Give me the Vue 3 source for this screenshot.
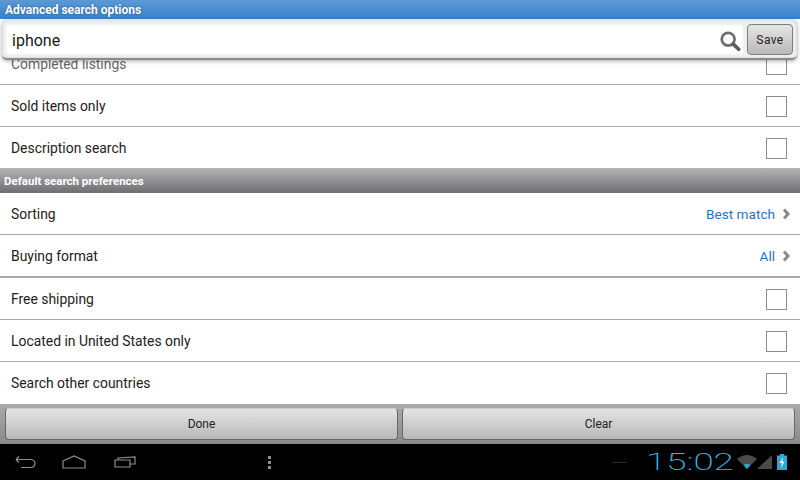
<template>
  <div class="screen">
    <div class="title">Advanced search options</div>
    <div class="search">
      <div class="field">
        <span class="query">iphone</span>
        <svg class="glass" width="22" height="22" viewBox="0 0 24 24">
          <circle cx="10" cy="10" r="7" fill="none" stroke="#6e6e6e" stroke-width="3" />
          <path d="M15.500 15.500l6 5.500" stroke="#5c5c5c" stroke-width="4" stroke-linecap="round" />
        </svg>
      </div>
      <button class="save">Save</button>
    </div>
    <div class="list">
      <div v-for="row in topRows" :key="row" class="row">
        <span class="label">{{ row }}</span>
        <span class="check"></span>
      </div>
      <div class="section">Default search preferences</div>
      <div v-for="row in linkRows" :key="row.label" class="row">
        <span class="label">{{ row.label }}</span>
        <span class="value">{{ row.value }}</span>
        <svg class="chevron" width="9" height="12" viewBox="0 0 9 12">
          <path d="M2 1.500L6 6L2 10.500" fill="none" stroke="#8a8a8a" stroke-width="3" />
        </svg>
      </div>
      <div v-for="row in bottomRows" :key="row" class="row">
        <span class="label">{{ row }}</span>
        <span class="check"></span>
      </div>
    </div>
    <div class="actions">
      <button class="action">Done</button>
      <button class="action">Clear</button>
    </div>
    <div class="nav">
      <div class="nav-left">
        <svg class="back" width="21" height="12" viewBox="0 0 21 12">
          <path d="M1 3.500H15Q20 3.500 20 7.500Q20 11.500 15 11.500H6M1 3.500l3-3M1 3.500l3 3" fill="none" stroke="#8e8e8e" stroke-width="1.200" />
        </svg>
        <svg class="home" width="24" height="14" viewBox="0 0 24 14">
          <path d="M1 6L12 1L23 6V13H1Z" fill="none" stroke="#8e8e8e" stroke-width="1.200" />
        </svg>
        <svg class="recent" width="22" height="12" viewBox="0 0 22 12">
          <path d="M1 4H16V11H1ZM4 4V2L21 .8V8L16 8" fill="none" stroke="#8e8e8e" stroke-width="1.200" />
        </svg>
        <span class="dots"><i></i><i></i><i></i></span>
      </div>
      <div class="nav-right">
        <span class="dash"></span>
        <span class="clock">15:02</span>
        <svg width="20" height="16" viewBox="0 0 20 16">
          <path d="M0 5Q10-3 20 5L10 15Z" fill="#4a4a4a" />
          <path d="M6.500 11Q10 8.500 13.500 11L10 15Z" fill="#33a4d6" />
        </svg>
        <svg class="signal" width="15" height="16" viewBox="0 0 15 16">
          <path d="M15 1V15H0Z" fill="#4a4a4a" />
        </svg>
        <svg class="battery" width="10" height="16" viewBox="0 0 10 16">
          <path d="M3 0H7V1.500H10V16H0V1.500H3Z" fill="#33a4d6" />
          <path d="M6 3L2.500 9H4.800L4 14L7.500 7.500H5.200Z" fill="#e8f6fc" />
        </svg>
      </div>
    </div>
  </div>
</template>

<script setup>
const topRows = ["Completed listings", "Sold items only", "Description search"];
const linkRows = [
  { label: "Sorting", value: "Best match" },
  { label: "Buying format", value: "All" },
];
const bottomRows = ["Free shipping", "Located in United States only", "Search other countries"];
</script>

<style>
html,
body {
  margin: 0;
  background: #000;
}
</style>

<style scoped>
.screen {
  width: 800px;
  height: 480px;
  display: flex;
  flex-direction: column;
  overflow: hidden;
  background: #fff;
  font-family: Roboto, "Liberation Sans", sans-serif;
}

.title {
  height: 19px;
  flex: none;
  padding: 1px 0 0 5px;
  box-sizing: border-box;
  background: linear-gradient(#5c9ad6, #3781cb);
  color: #fff;
  font-size: 12px;
  font-weight: 700;
  line-height: 18px;
  text-shadow: 0 0 2px #1d4f80;
}

.search {
  position: relative;
  z-index: 2;
  height: 40px;
  flex: none;
  box-sizing: border-box;
  display: flex;
  gap: 3px;
  margin: 1px 3px 0 2px;
  padding: 4px 4px 3px 3px;
  border-radius: 5px;
  background: #efefef;
  border-bottom: 2px solid #8a8a8a;
  box-shadow: 0 1px 4px rgba(0, 0, 0, 0.35), inset 0 0 2px #bbb;
}

.field {
  flex: 1;
  display: flex;
  align-items: center;
  justify-content: space-between;
  padding: 0 3px 0 7px;
  background: #fff;
  box-shadow: inset 0 0 3px #ddd;
}

.query {
  padding-top: 2px;
  font-size: 16px;
  color: #1a1a1a;
}

.glass {
  margin-top: 3px;
}

.save {
  width: 46px;
  margin: 0;
  padding: 0;
  border: 1px solid #7d7d7d;
  border-radius: 4px;
  background: linear-gradient(#e6e6e6, #b8b8b8);
  color: #222;
  font: 12px Roboto, "Liberation Sans", sans-serif;
  letter-spacing: 0.4px;
}

.list {
  flex: 1;
  min-height: 0;
  margin-top: -17px;
  overflow: hidden;
}

.row {
  height: 42px;
  box-sizing: border-box;
  display: flex;
  align-items: center;
  padding: 1px 13px 0 11px;
  border-bottom: 1px solid #a8a8a8;
  color: #222;
  font-size: 13.900px;
}

.row:first-child .label {
  color: #666;
}

.row:nth-child(6) {
  height: 43px;
  border-bottom-width: 2px;
}

.row:last-child {
  padding-top: 0;
  border-bottom: none;
}

.label {
  flex: 1;
}

.check {
  width: 19px;
  height: 19px;
  border: 1px solid #8c8c8c;
}

.value {
  margin-right: 7px;
  color: #1f74cc;
  font-size: 13.600px;
}

.chevron {
  margin-right: -4px;
}

.section {
  position: relative;
  height: 25px;
  box-sizing: border-box;
  margin-top: -1px;
  padding: 1px 0 0 4px;
  background: linear-gradient(#b5b5b5, #6e6e72);
  color: #fff;
  font-size: 11.500px;
  font-weight: 700;
  line-height: 24px;
}

.actions {
  height: 40px;
  flex: none;
  box-sizing: border-box;
  display: flex;
  gap: 4px;
  padding: 4px 5px;
  background: linear-gradient(#aaa, #8b8b8b);
}

.action {
  flex: 1;
  margin: 0;
  padding: 0;
  border: 1px solid #666;
  border-top-color: #ccc;
  border-radius: 4px;
  background: linear-gradient(#e4e4e4, #b8b8b8);
  color: #222;
  font: 12px Roboto, "Liberation Sans", sans-serif;
}

.nav {
  height: 36px;
  flex: none;
  display: flex;
  justify-content: space-between;
  align-items: center;
  padding: 0 13px 0 15px;
  background: #000;
}

.nav-left,
.nav-right {
  display: flex;
  align-items: center;
}

.home {
  margin-left: 26px;
}

.recent {
  margin-left: 28px;
}

.dots {
  display: flex;
  flex-direction: column;
  gap: 2px;
  margin-left: 132px;
}

.dots i {
  width: 3px;
  height: 3px;
  background: #8e8e8e;
}

.dash {
  width: 15px;
  height: 1px;
  margin-right: 19px;
  background: #2a2a2a;
}

.clock {
  width: 89px;
  margin-right: 2px;
  transform: scaleX(1.530);
  transform-origin: left center;
  color: #38b4e8;
  font-size: 24px;
  font-weight: 200;
  white-space: nowrap;
}

.battery {
  margin-left: 5px;
}
</style>
